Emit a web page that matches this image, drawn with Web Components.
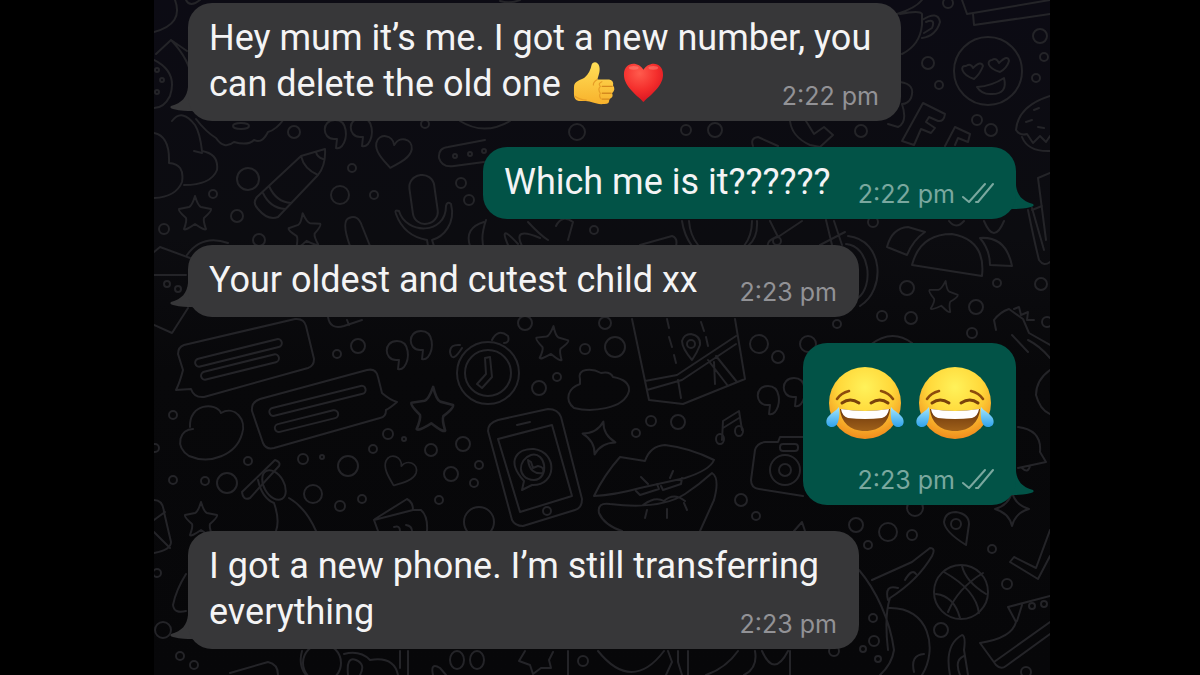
<!DOCTYPE html>
<html lang="en">
<head>
<meta charset="utf-8">
<meta name="viewport" content="width=device-width, initial-scale=1">
<title>Chat</title>
<style>
  html, body { margin: 0; min-height: 100%; background: #000; }
  body { font-family: Roboto, "Liberation Sans", sans-serif; color: #f4f4f5; }
</style>
</head>
<body>
<chat-screen>
  <chat-bubble style="--width: 713px" time="2:22 pm">Hey mum it’s me. I got a new number, you can delete the old one <chat-emoji name="thumb"></chat-emoji><chat-emoji name="heart"></chat-emoji></chat-bubble>
  <chat-bubble out style="--width: 533px" time="2:22 pm">Which me is it??????</chat-bubble>
  <chat-bubble style="--width: 671px" time="2:23 pm">Your oldest and cutest child xx</chat-bubble>
  <chat-bubble out big style="--width: 213px" time="2:23 pm"><chat-emoji name="joy"></chat-emoji><chat-emoji name="joy"></chat-emoji></chat-bubble>
  <chat-bubble style="--width: 671px" time="2:23 pm">I got a new phone. I’m still transferring everything</chat-bubble>
</chat-screen>

<template id="screen">
  <style>
    :host { display: grid; grid-template-columns: 77fr 448fr 75fr; min-height: 100vh; background: #000; }
    .panel { grid-column: 2; position: relative; overflow: hidden; background: linear-gradient(#0c0b14, #0c0c10 35%, #08080a 55%, #070709); }
    chat-wallpaper { position: absolute; inset: 0; }
    main { position: relative; display: flex; flex-direction: column; gap: 26px; padding: 3px 34px 24px; }
  </style>
  <div class="panel">
    <chat-wallpaper></chat-wallpaper>
    <main><slot></slot></main>
  </div>
</template>

<template id="bubble">
  <style>
    :host { display: block; align-self: flex-start; position: relative; box-sizing: border-box; width: var(--width); max-width: 100%; --fill: #373739; --meta: #929296; }
    :host([out]) { align-self: flex-end; --fill: #025347; --meta: #7aa89f; }
    .box { position: relative; display: flow-root; background: var(--fill); border-radius: 24px; padding: 12px 22px 10px 21px; font-size: 36px; line-height: 46px; }
    .meta { float: right; display: flex; align-items: center; gap: 7px; margin: 20px 0 0 16px; font-family: Inter, sans-serif; font-size: 25px; line-height: 30px; color: var(--meta); }
    .ticks { display: none; flex: none; width: 32px; height: 24px; }
    :host([out]) .ticks { display: block; }
    .tail { position: absolute; left: -18px; bottom: 0; width: 46px; height: 46px; fill: var(--fill); }
    :host([out]) .tail { left: auto; right: -18px; transform: scaleX(-1); }
    :host([big]) .text { display: flex; gap: 10px; padding-top: 10px; }
  </style>
  <svg class="tail" viewBox="0 0 46 46" aria-hidden="true"><path d="M18 0V12C17 22 12 28 1 31Q-1 33 3 34C11 36 17 36 22 36L46 46V0Z"/></svg>
  <div class="box">
    <span class="text"><slot></slot></span>
    <div class="meta"><time></time>
      <svg class="ticks" viewBox="0 0 32 24" fill="none" stroke="currentColor" stroke-width="2" stroke-linecap="round" stroke-linejoin="round" role="img" aria-label="Delivered"><path d="M1 15L7 20L23 2M14 20L16 20L31 2"/></svg>
    </div>
  </div>
</template>

<template id="thumb">
  <svg viewBox="0 0 45 45" role="img" aria-label="thumbs up">
    <defs><linearGradient id="g" x1="0" y1="0" x2="0" y2="1"><stop offset="0" stop-color="#ffdf58"/><stop offset="1" stop-color="#f8b22c"/></linearGradient></defs>
    <path fill="url(#g)" d="M2 27C2 20 9 20 13 17C17 13 19 9 20 4C21 0 27 0 28 6C29 11 27 15 26 19H38Q43 20 42 25Q45 29 41 33Q43 37 38 39Q39 44 33 44C24 45 20 41 14 41H7Q2 40 2 34Z"/>
    <path fill="none" stroke="#d68a1e" stroke-width="1.4" stroke-linecap="round" d="M41 26H31M40 33H31M38 39H31"/>
    <path fill="none" stroke="#e79d27" stroke-width="1.2" d="M26 19Q21 22 22 25M31 21Q26 23 29 26Q26 29 29 33Q27 36 30 39M3 36Q9 40 15 40"/>
  </svg>
</template>
<template id="heart">
  <svg viewBox="0 0 45 45" role="img" aria-label="red heart">
    <defs><radialGradient id="g" cx=".4" cy=".25" r=".8"><stop offset="0" stop-color="#ff5b4d"/><stop offset=".55" stop-color="#f42e2c"/><stop offset="1" stop-color="#d51220"/></radialGradient></defs>
    <path fill="url(#g)" d="M23 42C19 37 3 27 3 14C3 0 18 0 23 9C28 0 43 0 43 14C43 27 27 37 23 42Z"/>
    <ellipse cx="13" cy="7" rx="5" ry="2" fill="#ff9a8c" opacity=".4"/><ellipse cx="33" cy="7" rx="5" ry="2" fill="#ff9a8c" opacity=".4"/>
  </svg>
</template>
<template id="joy">
  <svg viewBox="0 0 80 80" role="img" aria-label="face with tears of joy">
    <defs>
      <radialGradient id="f" cx=".5" cy=".28" r=".75"><stop offset="0" stop-color="#fff25a"/><stop offset=".5" stop-color="#ffd83a"/><stop offset="1" stop-color="#ef851a"/></radialGradient>
      <linearGradient id="t" x1="0" y1="0" x2="0" y2="1"><stop offset="0" stop-color="#a8e6fb"/><stop offset="1" stop-color="#2ea2ec"/></linearGradient>
      <linearGradient id="m" x1="0" y1="0" x2="0" y2="1"><stop offset="0" stop-color="#6a350b"/><stop offset="1" stop-color="#a0611a"/></linearGradient>
    </defs>
    <circle cx="41" cy="38" r="36" fill="url(#f)"/>
    <path fill="none" stroke="#8c4c0c" stroke-width="2.6" stroke-linecap="round" d="M13 34Q17 28 25 26M69 34Q65 28 57 26"/>
    <path fill="none" stroke="#7a420b" stroke-width="3" stroke-linecap="round" d="M18 38Q26 32 35 38M47 38Q56 32 64 38"/>
    <path fill="url(#m)" d="M16 44Q41 48 66 44C65 57 56 66 41 66S17 57 16 44Z"/>
    <path fill="#fff" d="M17 44Q41 48 65 44Q64 51 58 53Q41 55 24 53Q18 51 17 44Z"/>
    <path fill="url(#t)" d="M15 42C16 51 15 62 8 62C2 62 1 56 4 52C7 48 12 46 15 42ZM67 42C66 51 67 62 74 62C80 62 81 56 78 52C75 48 70 46 67 42Z"/>
  </svg>
</template>

<template id="wallpaper">
  <style>
    :host { display: block; }
    svg { display: block; width: 100%; height: 100%; }
    .s { fill: none; stroke: #242428; stroke-width: 2; stroke-linecap: round; stroke-linejoin: round; }
  </style>
  <svg viewBox="154 0 896 675" preserveAspectRatio="xMidYMid slice" aria-hidden="true">
    <defs>
      <path id="star" d="M0-17Q3-7 6-6L16-4Q17-2 9 5Q8 8 11 16Q10 18 0 11Q-10 18-11 16Q-8 8-9 5Q-17-2-16-4L-6-6Q-3-7 0-17Z"/>
      <path id="quote" d="M8 14C14 6 14-12 1-12C-13-12-12 7 0 7H3L2 16Q5 17 8 14Z"/>
      <path id="spark" d="M0-17Q3-4 17 0Q3 4 0 17Q-3 4-17 0Q-3-4 0-17Z"/>
      <path id="love" d="M0 16C-8 10-18 3-18-6C-17-17-3-17 0-7C3-17 17-17 18-6C18 3 8 10 0 16Z"/>
    </defs>
    <g class="s">
      <g id="dots"></g>
      <!-- left edge: coat and cloud -->
      <path d="M175 0Q184 24 154 32M156 54L171 40L187 51M171 40Q190 60 192 80M154 60Q178 72 170 96Q164 108 154 108"/>
      <circle cx="162" cy="80" r="2"/><circle cx="157" cy="92" r="2"/><circle cx="157" cy="70" r="2"/>
      <path d="M154 133Q170 136 169 163Q185 164 182 182Q176 197 154 198M172 121Q182 108 195 125Q200 133 202 151Q219 154 217 170Q211 185 184 185M194 151L202 153"/>
      <path d="M196 119Q206 132 216 138Q224 150 234 142Q248 146 254 140Q262 144 268 132Q276 130 284 119"/><ellipse cx="241" cy="126" rx="8" ry="3"/>
      <!-- pencil -->
      <path d="M325 149L301 156L257 197Q252 203 258 209Q268 221 278 217L318 175Q326 165 325 149ZM301 156Q304 169 318 175M269 186Q276 202 291 203M263 193Q270 208 285 209M316 152Q317 157 323 159"/>
      <use href="#quote" x="334" y="132"/><use href="#quote" x="360" y="130"/>
      <use href="#love" transform="translate(393 152) rotate(10)"/>
      <!-- flute and plate -->
      <path d="M485 140L448 147Q438 148 439 158Q442 168 454 166L484 162M460 121Q484 136 510 121"/>
      <circle cx="455" cy="156" r="2"/><circle cx="470" cy="154" r="2"/><circle cx="484" cy="151" r="2"/>
      <!-- microphone -->
      <rect x="411" y="175" width="25" height="49" rx="12" transform="rotate(-8 423 199)"/>
      <path d="M396 214Q394 209 399 211C406 235 446 235 446 206Q447 201 451 204C456 224 443 237 432 240L434 246M396 214Q404 236 427 240L428 246"/>
      <use href="#star" x="195" y="213"/><use href="#star" transform="translate(305 230) rotate(-8)"/>
      <path d="M350 246Q341 221 349 218Q358 214 362 226L370 246M187 255Q202 234 228 243M154 252L160 247L190 258M154 275H186M154 325L172 333L188 308"/>
      <circle cx="167" cy="284" r="3"/><circle cx="178" cy="289" r="3"/>
      <!-- between the first replies -->
      <path d="M484 222Q464 228 470 246M486 220Q480 238 484 248M508 245Q498 222 518 244M522 246Q512 226 540 238M528 222Q540 235 548 240M556 226Q562 214 573 222L568 240M640 245L672 236Q678 238 676 246"/>
      <path d="M682 221Q684 235 692 246M689 221Q690 235 698 245M748 246Q758 238 757 221M752 221Q752 236 744 246M770 221L778 237Q766 240 768 247M778 237L802 221M820 245L845 232M826 220L832 245M834 221L842 245"/>
      <path d="M848 236C884 240 886 290 860 306M846 244C870 246 874 286 858 298"/><circle cx="777" cy="241" r="4"/>
      <!-- cup, book, smitten face -->
      <path d="M897 14Q916 8 922 0M900 14Q920 10 922 14V25Q920 45 902 54M922 20Q938 10 940 22Q936 36 922 38M926 22Q936 18 932 28L924 33"/>
      <path d="M962 0L967 14L1050 0M973 14L974 25L1050 14"/>
      <circle cx="988" cy="71" r="34"/>
      <path d="M974 79C960 74 960 65 966 66Q971 63 973 68Q981 60 983 66Q980 74 974 79ZM1000 72C986 68 987 60 992 60Q996 57 999 63Q1008 54 1009 61Q1007 68 1000 72ZM977 87Q992 86 1004 78Q1008 94 992 94Q982 95 977 87Z"/>
      <path d="M900 82Q916 84 911 98Q908 104 902 104Q908 122 898 127L888 124M923 103L945 114Q944 122 938 121L929 117L926 122L935 128L931 133L921 129L914 145L902 141ZM945 146L955 127L970 134L968 142L958 138L955 145M790 121Q792 137 810 145L820 147L833 135L824 127L814 134L806 121M753 146Q750 138 758 137L778 146"/>
      <path d="M1050 96Q1018 106 1016 130Q1020 136 1027 134L1033 143L1040 136L1046 142L1050 136M1022 137Q1028 152 1050 151M1026 122L1032 120M1034 110L1039 108M1038 127L1044 128"/>
      <!-- shell and pencil case at the right -->
      <path d="M887 247Q892 228 908 227L925 232Q913 240 907 255ZM912 265Q920 234 952 234Q986 240 982 276ZM980 238Q1006 236 1012 266L990 265Q990 250 980 238ZM984 221Q994 245 1004 221M949 221Q956 230 964 221"/>
      <path d="M1050 173L1038 178L1046 240M1028 210Q1034 240 1039 260Q1044 267 1050 262M1032 208L1044 250M1032 210L1042 206"/>
      <use href="#star" transform="translate(943 296) rotate(10) scale(.9)"/>
      <path d="M996 330L994 320Q1000 312 1009 309L1023 319L1029 333L1050 345M1014 309L1019 307L1021 315L1028 312L1027 320L1034 320M1028 340Q1040 346 1050 358M1050 370Q1036 380 1036 395Q1040 410 1050 414M1012 335L1028 352"/>
      <!-- chat cards -->
      <path d="M184 345L295 319Q304 318 306 326L314 359Q314 366 308 368L204 397Q194 398 191 389L176 390Q180 382 183 370L178 354Q178 347 184 345Z"/>
      <rect x="194" y="349" width="89" height="8" rx="4" transform="rotate(-14 238 353)"/><rect x="200" y="363" width="80" height="8" rx="4" transform="rotate(-14 240 367)"/>
      <path d="M260 399L367 370Q376 368 378 377L382 393Q390 400 397 402Q390 408 386 410Q386 417 380 418L274 448Q266 450 263 443L252 411Q251 402 260 399Z"/>
      <rect x="268" y="397" width="99" height="8" rx="4" transform="rotate(-14 317 401)"/><rect x="274" y="417" width="65" height="8" rx="4" transform="rotate(-14 307 421)"/>
      <path d="M190 427C189 403 216 402 221 413C235 405 247 420 242 434C236 455 210 465 189 456C174 446 180 429 193 429"/>
      <use href="#quote" x="396" y="353"/><use href="#quote" x="420" y="343"/>
      <use href="#star" transform="translate(432 409) rotate(3) scale(1.3)"/><use href="#star" transform="translate(552 343) rotate(5)"/>
      <use href="#love" transform="translate(399 472) rotate(22) scale(.9)"/>
      <use href="#star" x="201" y="519"/>
      <path d="M328 317Q330 330 344 326L362 320M347 320L349 325M154 500Q163 500 164 512L171 542Q171 550 154 553M154 520L165 512M154 532Q164 542 170 548"/>
      <!-- ballpoint in a loop -->
      <path d="M242 492L275 460Q281 462 279 466L250 498Q243 501 242 492Z"/><ellipse cx="274" cy="485" rx="10" ry="16" transform="rotate(-30 274 485)"/><path d="M258 480Q262 498 274 503Q280 520 276 531M289 498Q306 508 316 531"/>
      <path d="M375 519L407 499Q413 502 413 510L421 510Q428 516 427 531M378 531L374 520L413 510"/><path d="M394 527Q400 525 400 531M406 525Q412 526 412 531"/>
      <!-- alarm clock -->
      <circle cx="488" cy="373" r="31"/><circle cx="488" cy="373" r="23"/><path d="M485 358L490 357L492 377L482 388L477 384L486 374ZM492 340Q498 328 508 336Q510 343 504 343M462 348Q452 364 450 352Q450 344 460 345"/>
      <!-- phone -->
      <path d="M498 420L548 409Q558 409 561 417L582 499Q582 508 575 510L523 526Q515 526 512 520L488 431Q488 423 498 420ZM498 439L552 425L572 496L520 512ZM517 425L530 422"/><circle cx="547" cy="511" r="4"/>
      <path d="M522 490L524 481C505 460 518 448 534 449C558 452 557 486 532 485Z"/><path d="M531 455C546 451 550 479 534 480C516 479 518 459 531 455ZM528 460Q530 475 543 473Q545 467 538 466L533 468L531 462Z"/>
      <path d="M580 379C577 368 592 368 601 373Q610 371 613 377Q630 380 629 391C624 410 590 412 574 408C564 400 568 388 580 384Z"/>
      <!-- map -->
      <path d="M632 319L649 400L683 404L735 383L745 379L735 319M645 381L677 375L736 336M647 390L682 380L736 344M708 360L728 386M716 356L737 382M667 319L669 328M669 337L672 347M674 355L676 363M678 380L681 398M701 322L704 331M706 337L708 346M714 362L715 384M692 360Q682 348 682 341Q684 334 691 334Q701 336 700 345Q697 353 692 360Z"/><circle cx="691" cy="344" r="4"/>
      <use href="#spark" transform="translate(599 438) rotate(15)"/>
      <path d="M722 440L723 421L739 411L742 430M723 428L739 418"/><ellipse cx="720" cy="439" rx="4" ry="5"/><ellipse cx="739" cy="431" rx="4" ry="5"/>
      <!-- lips -->
      <path d="M594 496Q604 475 620 457L645 461Q650 446 665 445Q690 448 714 460Q710 470 685 478L640 488Q615 495 594 496ZM599 513Q597 502 610 504Q660 510 685 494Q700 484 712 473Q720 478 714 500L700 531M599 513Q604 525 622 531M641 477L648 484M673 471L670 478M636 491L640 495L659 489L657 484M661 486L663 490L681 484L682 478M643 505Q655 496 664 501Q674 492 685 501M647 510L645 518M667 509L667 518M684 503L687 510"/>
      <use href="#quote" x="767" y="398"/><use href="#quote" x="793" y="390"/>
      <!-- camera -->
      <path d="M803 437H780L778 442H765Q757 443 755 450L751 480Q751 488 759 489L803 496"/><circle cx="785" cy="470" r="15"/><circle cx="785" cy="470" r="6"/><rect x="780" y="444" width="18" height="7" rx="3"/>
      <!-- bell, pin, spark, ball -->
      <path d="M1018 427Q1042 430 1040 452L1046 462L1018 468M1022 468Q1028 474 1030 466M794 531L802 522L805 531"/>
      <use href="#spark" transform="translate(1012 509)"/>
      <path d="M966 545Q945 532 944 522Q945 512 956 512Q969 514 969 524Z"/><circle cx="956" cy="524" r="5"/>
      <circle cx="961" cy="592" r="27"/><path d="M944 572Q976 590 979 613M983 573Q958 588 948 612M962 566Q966 582 986 594M936 594Q954 596 960 618"/>
      <path d="M859 570C876 590 890 620 894 650Q892 664 880 675M872 580L912 562L930 548Q936 548 932 556Q918 580 890 598Q884 616 888 650M888 608C930 606 938 650 922 675M905 580Q912 568 916 574M888 600Q884 584 898 588M914 672Q910 655 924 654"/>
      <path d="M1050 530L1036 568L1014 557L1010 562L1038 579L1050 556M1050 596L1008 607L1016 622Q1012 638 980 643L996 665Q1001 670 1006 666L1050 634M994 662L1050 622M1022 605L1017 621M950 675Q944 645 962 635Q966 636 964 650L968 675M960 675Q954 660 964 656"/><circle cx="1032" cy="606" r="3"/><circle cx="1044" cy="604" r="3"/>
      <!-- bottom strip -->
      <path d="M186 574Q176 590 173 605Q174 614 186 611M230 673L268 662Q278 664 278 675M302 651Q298 665 306 675M348 675Q346 656 356 660Q366 664 360 675M344 654Q360 650 370 660Q394 656 398 675M400 651V668M408 651V675M433 675Q430 662 440 668L446 675"/>
      <circle cx="322" cy="663" r="19"/><ellipse cx="457" cy="660" rx="7" ry="9"/><ellipse cx="477" cy="660" rx="7" ry="9"/>
      <path d="M525 651L519 661L530 665L533 674L541 668L551 668L549 660L553 652M568 651V675M598 651Q632 693 664 651M668 651L672 662L666 675M678 651V662L682 675M688 651V675M738 651Q726 668 706 675M755 651Q758 668 744 675M762 651Q774 678 788 651M790 651V675"/>
      <path d="M870 345Q892 328 912 343M186 0Q190 8 200 0M500 1Q510 4 520 0"/>
    </g>
  </svg>
</template>

<script>
const stamp = (host, id) => {
  const root = host.attachShadow({ mode: "open" });
  root.append(document.getElementById(id).content.cloneNode(true));
  return root;
};

/* Small rings of the wallpaper: x, y, radius. */
const RINGS = [
  [294,132,6],[248,179,11],[213,194,4],[237,216,6],[164,229,5],[259,240,6],[352,168,4],[340,195,9],[374,195,4],[461,183,5],[469,200,5],
  [425,124,4],[577,132,8],[686,130,5],[715,130,7],[861,131,6],[928,63,6],[939,85,4],[948,3,5],[1040,36,7],[1044,57,4],[1036,78,4],[977,120,5],[991,130,6],
  [907,288,7],[997,283,4],[1041,284,6],[976,307,7],[882,316,5],[911,318,6],[972,333,5],[837,324,4],[1047,322,5],[808,344,8],[778,357,6],[759,344,9],
  [337,354,4],[358,346,7],[173,415,4],[155,448,4],[173,480,4],[205,481,4],[227,483,10],[248,461,4],[303,459,5],[322,457,2],[348,466,10],[313,494,9],
  [340,506,5],[362,499,4],[373,449,4],[388,434,5],[404,439,2],[431,450,6],[463,444,7],[451,474,7],[439,500,4],[479,465,4],[474,483,4],
  [479,522,15],[525,323,7],[605,323,6],[585,349,5],[615,347,10],[557,377,4],[539,388,7],[651,421,5],[636,433,4],[678,422,7],[741,500,6],[756,516,4],
  [856,525,7],[888,532,9],[868,545,4],[912,535,5],[915,508,8],[992,549,4],[1007,584,5],[941,630,7],[874,641,5],[873,618,4],[863,649,3],[878,659,3],[1026,672,5],
  [163,630,8],[180,656,4],[194,665,4],[157,573,4],[583,661,5],[834,651,5],[594,230,4],[873,222,5]
];

customElements.define("chat-wallpaper", class extends HTMLElement {
  constructor() {
    super();
    const dots = stamp(this, "wallpaper").getElementById("dots");
    for (const [cx, cy, r] of RINGS) {
      const ring = document.createElementNS("http://www.w3.org/2000/svg", "circle");
      ring.setAttribute("cx", cx); ring.setAttribute("cy", cy); ring.setAttribute("r", r);
      dots.append(ring);
    }
  }
});

customElements.define("chat-emoji", class extends HTMLElement {
  constructor() {
    super();
    const root = stamp(this, this.getAttribute("name"));
    const style = document.createElement("style");
    style.textContent = `
      :host { display: inline-block; width: 44px; height: 44px; margin: -11px 3px -5px 2px; vertical-align: middle; }
      :host([name="joy"]) { width: 80px; height: 80px; margin: 0; }
      svg { display: block; width: 100%; height: 100%; }`;
    root.prepend(style);
  }
});

customElements.define("chat-bubble", class extends HTMLElement {
  constructor() {
    super();
    stamp(this, "bubble").querySelector("time").textContent = this.getAttribute("time");
  }
});

customElements.define("chat-screen", class extends HTMLElement {
  constructor() { super(); stamp(this, "screen"); }
});
</script>
</body>
</html>
